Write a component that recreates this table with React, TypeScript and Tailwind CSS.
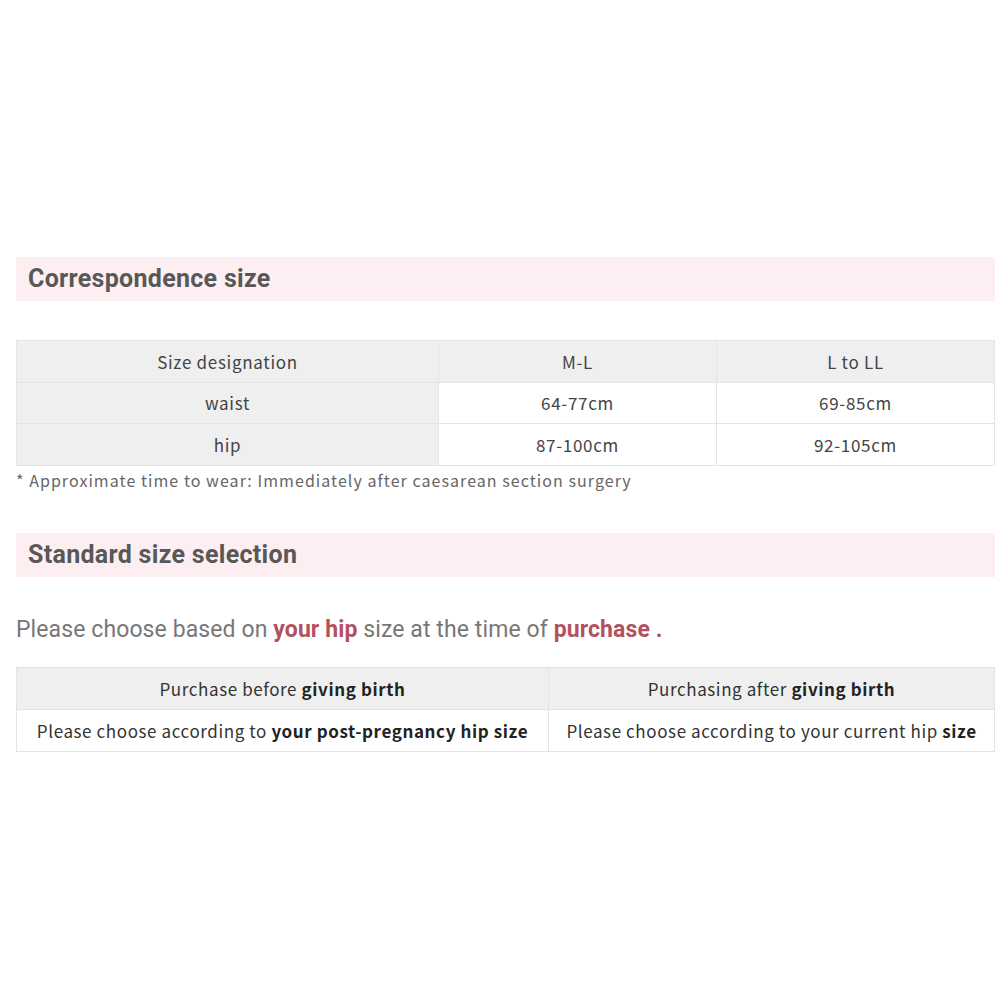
const cjk = { fontFamily: '"Noto Sans CJK JP", "Noto Sans", sans-serif' };

function SectionTitle({ children }: { children: string }) {
    return (
        <div className="bg-[#fdeef1] h-[44px] flex items-center pl-3">
            <h2 className="text-[25px] font-bold text-[#585858] tracking-[0.3px]" style={{ fontFamily: "Roboto, sans-serif" }}>
                {children}
            </h2>
        </div>
    );
}

const sizes = [
    { label: "Size designation", ml: "M-L", l: "L to LL", head: true },
    { label: "waist", ml: "64-77cm", l: "69-85cm", head: false },
    { label: "hip", ml: "87-100cm", l: "92-105cm", head: false },
];

export default function App() {
    return (
        <div className="w-[1000px] h-[1000px] bg-white pl-4 pr-[5px] pt-[257px]">
            <SectionTitle>Correspondence size</SectionTitle>

            <table className="w-full mt-[39px] border-collapse text-[17px] text-[#444] tracking-[0.7px]" style={cjk}>
                <tbody>
                    {sizes.map((row) => (
                        <tr key={row.label} className="h-[41.7px]">
                            <td className="w-[422px] bg-[#efefef] border border-[#e4e4e4] text-center p-0">{row.label}</td>
                            <td className={`w-[278px] border border-[#e4e4e4] text-center p-0 ${row.head ? "bg-[#efefef]" : "bg-white"}`}>{row.ml}</td>
                            <td className={`border border-[#e4e4e4] text-center p-0 ${row.head ? "bg-[#efefef]" : "bg-white"}`}>{row.l}</td>
                        </tr>
                    ))}
                </tbody>
            </table>
            <p className="text-[16px] text-[#666] mt-[3px] leading-[22px] tracking-[1.05px]" style={cjk}>
                * Approximate time to wear: Immediately after caesarean section surgery
            </p>

            <div className="mt-[42px]">
                <SectionTitle>Standard size selection</SectionTitle>
            </div>

            <p className="mt-[39px] text-[23px] text-[#777] leading-[28px] tracking-[0.1px]" style={{ fontFamily: "Roboto, sans-serif" }}>
                Please choose based on <b className="text-[#b5505f]">your hip</b> size at the time of{" "}
                <b className="text-[#b5505f]">purchase</b> <b className="text-[#b5505f]">.</b>
            </p>

            <table className="w-full mt-[23px] border-collapse text-[17px] text-[#333] tracking-[0.6px]" style={cjk}>
                <tbody>
                    <tr className="h-[42px] bg-[#efefef]">
                        <td className="w-[532px] border border-[#e4e4e4] text-center p-0">
                            Purchase before <b className="text-[#222]">giving birth</b>
                        </td>
                        <td className="border border-[#e4e4e4] text-center p-0">
                            Purchasing after <b className="text-[#222]">giving birth</b>
                        </td>
                    </tr>
                    <tr className="h-[42px] bg-white">
                        <td className="border border-[#e4e4e4] text-center p-0">
                            Please choose according to <b className="text-[#222]">your post-pregnancy hip size</b>
                        </td>
                        <td className="border border-[#e4e4e4] text-center p-0">
                            Please choose according to your current hip <b className="text-[#222]">size</b>
                        </td>
                    </tr>
                </tbody>
            </table>
        </div>
    );
}
